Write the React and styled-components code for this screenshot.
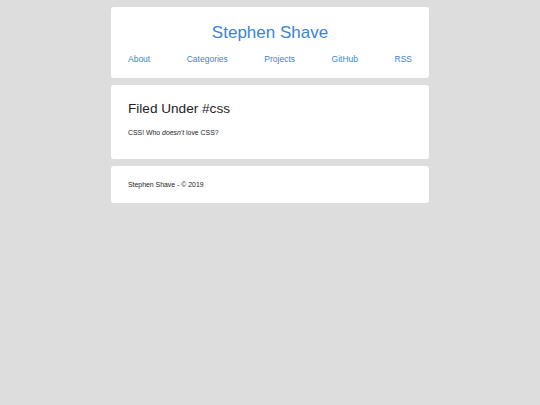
import React from 'react';
import styled, { createGlobalStyle } from 'styled-components';

const GlobalStyle = createGlobalStyle`
  html, body {
    margin: 0;
    padding: 0;
    background: #dddddd;
    font-family: "Liberation Sans", Arial, sans-serif;
    color: #222;
  }
`;

const Page = styled.div`
  width: 318px;
  margin: 7px auto;
  display: flex;
  flex-direction: column;
  gap: 7px;
`;

const Card = styled.section`
  background: #fff;
  border-radius: 3px;
  padding: ${props => props.$pad || '15px 17px'};
`;

const SiteTitle = styled.h1`
  margin: 0;
  text-align: center;
  font-size: 17px;
  font-weight: 400;
  line-height: 20px;
  color: #3a84d6;
`;

const Nav = styled.nav`
  display: flex;
  justify-content: space-between;
  margin-top: 11px;
`;

const NavLink = styled.a`
  font-size: 8.5px;
  line-height: 10px;
  color: #3a84d6;
  text-decoration: none;
`;

const Heading = styled.h2`
  margin: 0;
  font-size: 13.6px;
  font-weight: 400;
  line-height: 16px;
  color: #222;
`;

const Text = styled.p`
  margin: ${props => props.$margin || '0'};
  font-size: 6.9px;
  line-height: 9px;
  color: #222;
`;

const links = ['About', 'Categories', 'Projects', 'GitHub', 'RSS'];

export default function App() {
  return (
    <>
      <GlobalStyle />
      <Page>
        <Card $pad="16px 17px 14px">
          <SiteTitle>Stephen Shave</SiteTitle>
          <Nav>
            {links.map(l => (
              <NavLink key={l} href="#">{l}</NavLink>
            ))}
          </Nav>
        </Card>
        <Card $pad="16px 17px 22px">
          <Heading>Filed Under #css</Heading>
          <Text $margin="11px 0 0">
            CSS! Who <em>doesn't</em> love CSS?
          </Text>
        </Card>
        <Card $pad="14px 17px">
          <Text>Stephen Shave - © 2019</Text>
        </Card>
      </Page>
    </>
  );
}
